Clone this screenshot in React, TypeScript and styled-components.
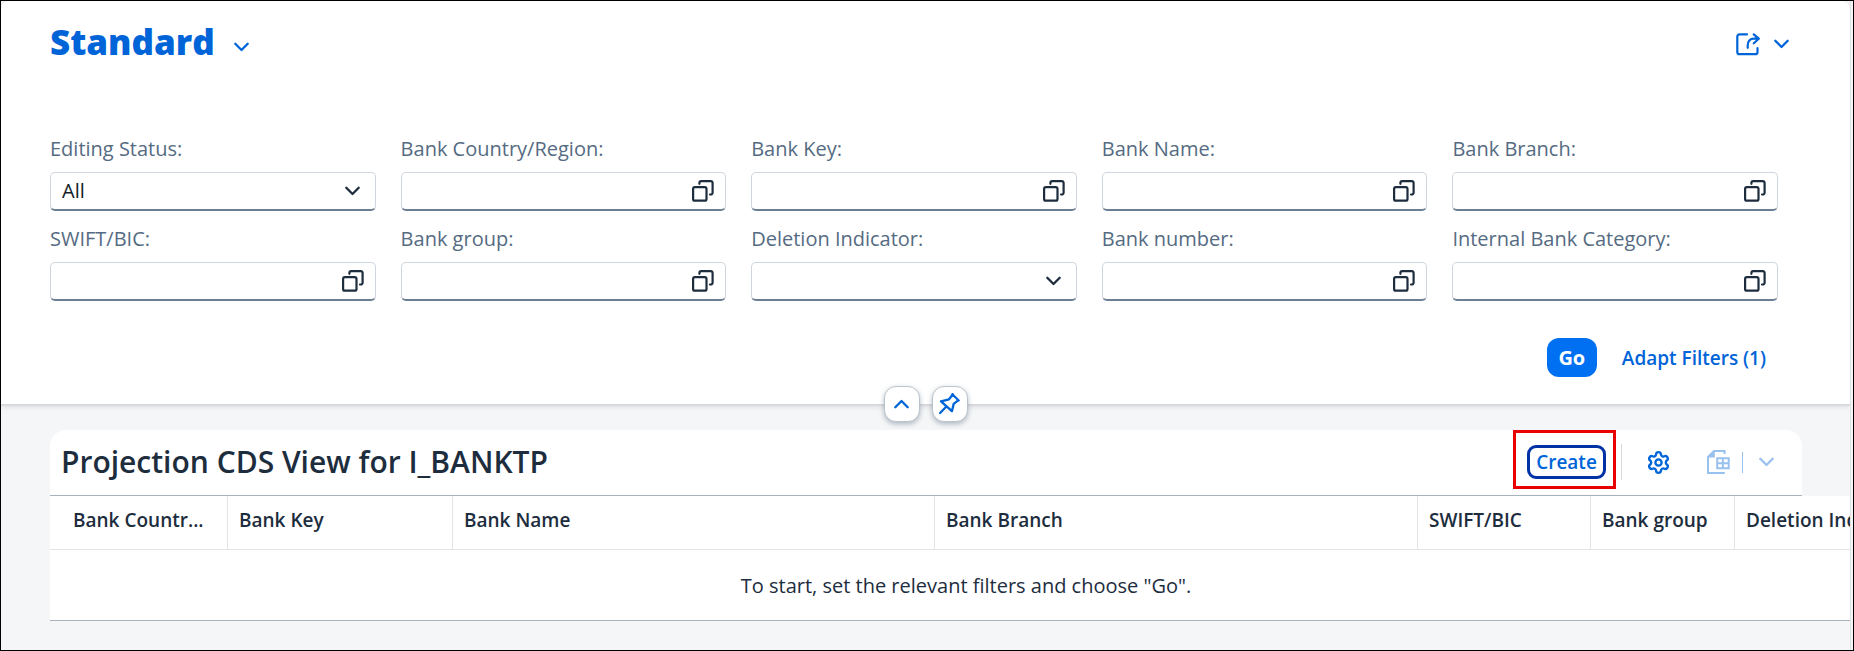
import React from 'react';
import styled, { createGlobalStyle } from 'styled-components';
import { Settings } from 'lucide-react';

const GlobalStyle = createGlobalStyle`
  *, *::before, *::after { box-sizing: border-box; }
  body { margin: 0; background: #f5f6f7; }
  button, input, select { font: inherit; color: inherit; }
  #root { font: 400 20px/26px "Open Sans", "Noto Sans", sans-serif; color: #1d2d3e; }
`;

const Frame = styled.div`
  display: flex;
  min-height: 100vh;
  border: 1px solid #000;
  background: #f5f6f7;
`;

const Content = styled.main`
  flex: 1;
  min-width: 0;
  overflow: hidden;
`;

const Gutter = styled.div`
  width: 3px;
  background: #f5f5f5;
  border-left: 1px solid #e2e2e2;
`;

const PageHeader = styled.header`
  position: relative;
  padding: 20px 72px 27px 49px;
  background: #fff;
  border-bottom: 2px solid #d9dadb;
  border-radius: 8px 8px 0 0;
  box-shadow: 0 1px 5px rgba(34, 53, 72, 0.12);
`;

const TitleRow = styled.div`
  display: flex;
  align-items: center;
  justify-content: space-between;
  height: 46px;
  margin-bottom: 69px;
`;

const PlainButton = styled.button`
  display: inline-flex;
  align-items: center;
  padding: 0;
  border: 0;
  background: none;
  color: #0064d9;
  cursor: pointer;
`;

const VariantHeading = styled.h1`
  align-self: flex-start;
  margin: 0;
  font-size: 35px;
  font-weight: 800;
  line-height: 42px;
`;

const VariantButton = styled(PlainButton)`
  gap: 19px;
  height: 42px;
  font-weight: 800;
  svg { align-self: flex-end; margin-bottom: 11px; }
`;

const ShareButton = styled(PlainButton)`
  gap: 14px;
  margin-right: -11px;
`;

const FilterGrid = styled.form`
  display: grid;
  grid-template-columns: repeat(5, minmax(0, 1fr));
  gap: 15px 25px;
`;

const Field = styled.div`
  display: flex;
  flex-direction: column;
  gap: 10px;
`;

const FieldLabel = styled.label`
  color: #556b82;
  white-space: nowrap;
`;

const FieldBox = styled.div`
  display: grid;
  grid-template-columns: 1fr auto;
  align-items: center;
  height: 39px;
  border: 1px solid #d0d6dd;
  border-bottom: 2px solid #6b7f94;
  border-radius: 5px;
  background: #fff;
`;

const TextInput = styled.input`
  min-width: 0;
  height: 100%;
  padding: 0 11px;
  border: 0;
  outline: 0;
  background: none;
`;

const HelpButton = styled(PlainButton)`
  margin-right: 11px;
  color: #1d2d3e;
`;

const SelectInput = styled.select`
  grid-area: 1 / 1 / 2 / 3;
  height: 100%;
  padding: 0 40px 0 11px;
  border: 0;
  outline: 0;
  appearance: none;
  background: none;
  color: #131e29;
`;

const SelectArrow = styled.span`
  grid-area: 1 / 2;
  display: flex;
  margin-right: 15px;
  pointer-events: none;
`;

const FilterActions = styled.div`
  display: flex;
  align-items: center;
  justify-content: flex-end;
  gap: 25px;
  margin-top: 37px;
  padding-right: 12px;
`;

const GoButton = styled.button`
  width: 50px;
  height: 39px;
  padding: 0;
  border: 0;
  border-radius: 12px;
  background: #0070f2;
  color: #fff;
  font-weight: 700;
`;

const TextButton = styled(PlainButton)`
  font-size: 19px;
  font-weight: 600;
  white-space: nowrap;
`;

const HeaderToggles = styled.div`
  position: absolute;
  left: 50%;
  bottom: -18px;
  display: flex;
  gap: 12px;
  transform: translateX(-50%);
`;

const ToggleButton = styled(PlainButton)`
  justify-content: center;
  width: 36px;
  height: 36px;
  border: 1px solid #bcc3ca;
  border-radius: 12px;
  background: #fff;
  box-shadow: 0 2px 5px rgba(85, 107, 130, 0.45);
`;

const TableSection = styled.section`
  margin: 24px 0 0 49px;
`;

const Toolbar = styled.div`
  display: flex;
  align-items: center;
  height: 66px;
  margin-right: 48px;
  padding: 0 28px 1px 11px;
  border-bottom: 1px solid #a8b2bc;
  border-radius: 16px 16px 0 0;
  background: #fff;
`;

const TableTitle = styled.h2`
  flex: 1;
  margin: 0;
  font-size: 30px;
  font-weight: 650;
  line-height: 38px;
  white-space: nowrap;
`;

const Highlight = styled.div`
  position: relative;
  margin-right: 15px;
  &::after {
    content: '';
    position: absolute;
    inset: -15px -10px -10px -14px;
    border: 3px solid #e90000;
    pointer-events: none;
  }
`;

const CreateButton = styled(TextButton)`
  justify-content: center;
  width: 79px;
  height: 34px;
  border: 3px solid #0032a5;
  border-radius: 9px;
`;

const Separator = styled.span<{ $accent?: boolean }>`
  width: 1px;
  height: ${(p) => (p.$accent ? 21 : 36)}px;
  background: ${(p) => (p.$accent ? '#99c1f0' : '#d9d9d9')};
`;

const SettingsButton = styled(PlainButton)`
  margin: 0 36px 0 24px;
`;

const ExportButton = styled(PlainButton)`
  gap: 12px;
  color: #99c1f0;
  cursor: default;
  svg:last-child { margin-left: 4px; }
`;

const DataTable = styled.table`
  width: calc(100% + 32px);
  table-layout: fixed;
  border-collapse: separate;
  border-spacing: 0;
  background: #fff;
`;

const Column = styled.col<{ $width?: number }>`
  width: ${(p) => (p.$width ? `${p.$width}px` : 'auto')};
`;

const HeadCell = styled.th`
  height: 54px;
  padding: 11px 0 0 11px;
  border-right: 1px solid #e3e4e5;
  border-bottom: 1px solid #e3e4e5;
  font-size: 19px;
  font-weight: 600;
  text-align: left;
  vertical-align: top;
  white-space: nowrap;
  &:first-child { padding-left: 23px; }
`;

const EmptyCell = styled.td`
  height: 71px;
  padding: 2px 0 0;
  border-bottom: 1px solid #a8b2bc;
  text-align: center;
`;

const Chevron = ({ up = false }: { up?: boolean }) => (
  <svg width="15" height="10" viewBox="0 0 15 10" fill="none" stroke="currentColor" strokeWidth="2.3" strokeLinecap="round" strokeLinejoin="round" aria-hidden="true">
    <path d={up ? 'M1.3 8.3 7.5 2l6.2 6.3' : 'M1.3 1.7 7.5 8l6.2-6.3'} />
  </svg>
);

const ValueHelpIcon = () => (
  <svg width="22" height="22" viewBox="0 0 22 22" fill="none" stroke="currentColor" strokeWidth="2.2" strokeLinecap="round" aria-hidden="true">
    <rect x="1.1" y="7.1" width="13.4" height="13.6" rx="1.8" />
    <path d="M7.4 3.8V2.9A1.8 1.8 0 0 1 9.2 1.1h9.6a1.8 1.8 0 0 1 1.8 1.8v9.8a1.8 1.8 0 0 1-1.8 1.8h-.8" />
  </svg>
);

const ShareIcon = () => (
  <svg width="24" height="23" viewBox="0 0 24 23" fill="none" stroke="currentColor" strokeWidth="2.2" strokeLinecap="round" strokeLinejoin="round" aria-hidden="true">
    <path d="M11 1.3H3.6a2.3 2.3 0 0 0-2.3 2.3v15.3a2.3 2.3 0 0 0 2.3 2.3h15.6a2.3 2.3 0 0 0 2.3-2.3v-3.7" />
    <path d="M11.7 14.8v-2.3c0-4.3 2.3-6.8 6.3-6.8h4.6M17.8 1.3l5 4.4-5 4.6" />
  </svg>
);

const PinIcon = () => (
  <svg width="21" height="22" viewBox="0 0 21 22" fill="none" stroke="currentColor" strokeWidth="2.3" strokeLinecap="round" strokeLinejoin="round" aria-hidden="true">
    <path d="m2 8.3 8-2 3.9-5M13.3 1.2l6.4 6.3M19.4 7.2l-4.7 3.7-1.8 7.3L2 8.3M7.4 13.5 1.1 20" />
  </svg>
);

const SpreadsheetIcon = () => (
  <svg width="23" height="24" viewBox="0 0 23 24" fill="none" stroke="currentColor" strokeWidth="2" aria-hidden="true">
    <path d="M17.6 4V1H7L1 7v16h16.8" />
    <path d="M1 7.6V7l6-6h.8v6.6z" fill="currentColor" stroke="none" />
    <path d="M10.2 8.3h11.5v10H10.2zM15.9 8.3v10M10.2 13.3h11.5" />
  </svg>
);

type Filter = { label: string; select?: boolean; value?: string };

const filters: Filter[] = [
  { label: 'Editing Status:', select: true, value: 'All' },
  { label: 'Bank Country/Region:' },
  { label: 'Bank Key:' },
  { label: 'Bank Name:' },
  { label: 'Bank Branch:' },
  { label: 'SWIFT/BIC:' },
  { label: 'Bank group:' },
  { label: 'Deletion Indicator:', select: true, value: '' },
  { label: 'Bank number:' },
  { label: 'Internal Bank Category:' },
];

const columns: { title: string; width?: number }[] = [
  { title: 'Bank Countr...', width: 178 },
  { title: 'Bank Key', width: 225 },
  { title: 'Bank Name', width: 482 },
  { title: 'Bank Branch', width: 483 },
  { title: 'SWIFT/BIC', width: 173 },
  { title: 'Bank group', width: 144 },
  { title: 'Deletion Indicator' },
];

function FilterField({ label, select, value, id }: Filter & { id: string }) {
  return (
    <Field>
      <FieldLabel htmlFor={id}>{label}</FieldLabel>
      <FieldBox>
        {select ? (
          <>
            <SelectInput id={id} defaultValue={value}>
              <option value={value}>{value}</option>
            </SelectInput>
            <SelectArrow><Chevron /></SelectArrow>
          </>
        ) : (
          <>
            <TextInput id={id} type="text" />
            <HelpButton type="button" aria-label="Show value help"><ValueHelpIcon /></HelpButton>
          </>
        )}
      </FieldBox>
    </Field>
  );
}

export default function App() {
  return (
    <>
      <GlobalStyle />
      <Frame>
        <Content>
          <PageHeader>
            <TitleRow>
              <VariantHeading>
                <VariantButton type="button">Standard<Chevron /></VariantButton>
              </VariantHeading>
              <ShareButton type="button" aria-label="Share"><ShareIcon /><Chevron /></ShareButton>
            </TitleRow>
            <FilterGrid id="filters" onSubmit={(e) => e.preventDefault()}>
              {filters.map((f, i) => <FilterField key={f.label} id={`filter-${i}`} {...f} />)}
            </FilterGrid>
            <FilterActions>
              <GoButton type="submit" form="filters">Go</GoButton>
              <TextButton type="button">Adapt Filters (1)</TextButton>
            </FilterActions>
            <HeaderToggles>
              <ToggleButton type="button" aria-label="Collapse header"><Chevron up /></ToggleButton>
              <ToggleButton type="button" aria-label="Pin header"><PinIcon /></ToggleButton>
            </HeaderToggles>
          </PageHeader>
          <TableSection>
            <Toolbar>
              <TableTitle>Projection CDS View for I_BANKTP</TableTitle>
              <Highlight>
                <CreateButton type="button">Create</CreateButton>
              </Highlight>
              <Separator />
              <SettingsButton type="button" aria-label="Settings"><Settings size={25} strokeWidth={2.2} /></SettingsButton>
              <ExportButton type="button" aria-label="Export to spreadsheet" disabled>
                <SpreadsheetIcon />
                <Separator $accent />
                <Chevron />
              </ExportButton>
            </Toolbar>
            <DataTable>
              <colgroup>
                {columns.map((c) => <Column key={c.title} $width={c.width} />)}
              </colgroup>
              <thead>
                <tr>{columns.map((c) => <HeadCell key={c.title} scope="col">{c.title}</HeadCell>)}</tr>
              </thead>
              <tbody>
                <tr>
                  <EmptyCell colSpan={columns.length}>To start, set the relevant filters and choose "Go".</EmptyCell>
                </tr>
              </tbody>
            </DataTable>
          </TableSection>
        </Content>
        <Gutter />
      </Frame>
    </>
  );
}
